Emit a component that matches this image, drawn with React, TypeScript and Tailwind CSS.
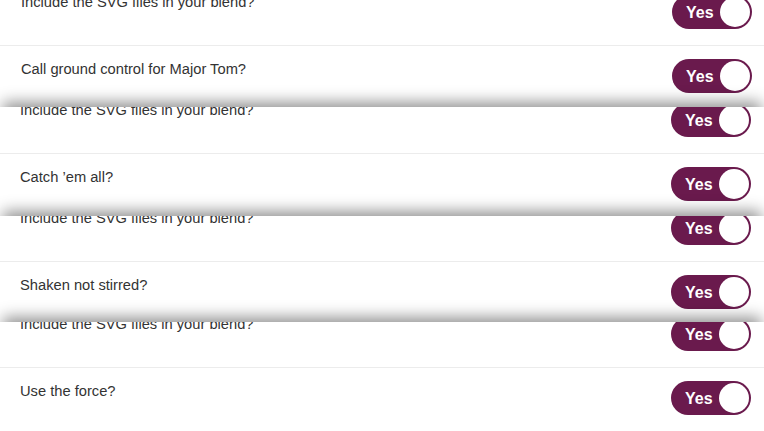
const STRIPS = [
  { bottom: 'Call ground control for Major Tom?', h: 'h-[107px]', top: '-mt-[18px]', px: 'pl-[21px] pr-[12px]' },
  { bottom: 'Catch ’em all?', h: 'h-[109px]', top: '-mt-[17px]', px: 'pl-[20px] pr-[13px]' },
  { bottom: 'Shaken not stirred?', h: 'h-[106px]', top: '-mt-[18px]', px: 'pl-[20px] pr-[13px]' },
  { bottom: 'Use the force?', h: 'h-[109px]', top: '-mt-[18px]', px: 'pl-[20px] pr-[13px]' },
];

function Toggle() {
  return (
    <div className="flex items-center justify-between w-[80px] h-[34px] mt-[1px] rounded-full bg-[#6a1a4d] p-[2px] shrink-0">
      <span className="pl-[12px] pt-[2px] text-white text-[16px] font-bold leading-none">Yes</span>
      <span className="w-[30px] h-[30px] rounded-full bg-white" />
    </div>
  );
}

function Row({ label, className, labelClass }: { label: string; className: string; labelClass: string }) {
  return (
    <div className={`flex items-start justify-between pt-3 ${className}`}>
      <span className={`text-[14.7px] leading-5 text-[#333] ${labelClass}`}>{label}</span>
      <Toggle />
    </div>
  );
}

export default function App() {
  return (
    <div
      className="w-[764px] h-[431px] overflow-hidden bg-white"
      style={{ fontFamily: '"Liberation Sans", Arial, sans-serif' }}
    >
      {STRIPS.map((strip, i) => (
        <div
          key={i}
          className={`overflow-hidden bg-white ${strip.h} ${
            i > 0 ? 'relative shadow-[0_-8px_14px_-3px_rgba(0,0,0,0.42)]' : ''
          }`}
        >
          {/* top row, half hidden under the strip above */}
          <div className={strip.px}>
            <Row
              label="Include the SVG files in your blend?"
              className={`${strip.top} pb-[16px]`}
              labelClass="-mt-[2px]"
            />
          </div>
          <div className="border-t border-[#ececec]" />
          <div className={strip.px}>
            <Row label={strip.bottom} className="pb-[15px]" labelClass="mt-[1px]" />
          </div>
        </div>
      ))}
    </div>
  );
}
